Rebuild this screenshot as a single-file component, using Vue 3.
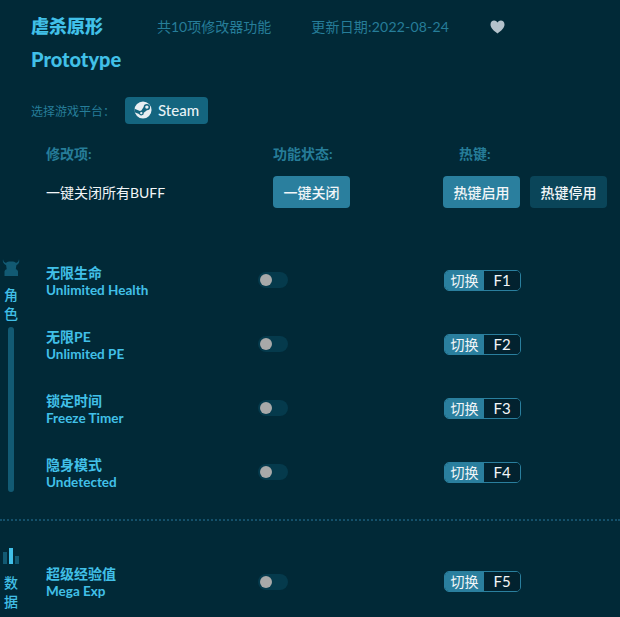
<template>
  <div class="page">
    <header class="head">
      <div class="head-top">
        <h1 class="title">虐杀原形</h1>
        <span class="info count">共10项修改器功能</span>
        <span class="info date">更新日期:2022-08-24</span>
        <svg class="heart" viewBox="0 0 16 15" width="15" height="14">
          <path d="M8 14.5C3.5 11 .5 8.4.5 4.8.5 2.3 2.3.6 4.4.6 5.900.6 7.200 1.400 8 2.700 8.800 1.400 10.100.6 11.600.6c2.100 0 3.900 1.700 3.900 4.200 0 3.600-3 6.200-7.500 9.700z" fill="#b4c2cb" />
        </svg>
      </div>
      <h2 class="title en">Prototype</h2>
    </header>

    <div class="platform">
      <span class="platform-label">选择游戏平台：</span>
      <div class="steam">
        <svg viewBox="0 0 20 20" width="18" height="18">
          <circle cx="10" cy="10" r="9.5" fill="#e8eef2" />
          <path d="M.6 12.4l5 2.1a2.8 2.8 0 0 0 5.3-1.5l3.5-2.6a3.6 3.6 0 1 0-3.7-3.7L8.2 10.6a2.8 2.8 0 0 0-1.6.4L.5 8.5z" fill="#14657f" />
          <circle cx="14.3" cy="6.8" r="1.9" fill="#e8eef2" />
          <circle cx="8.1" cy="13.4" r="1.3" fill="#e8eef2" />
        </svg>
        <span>Steam</span>
      </div>
    </div>

    <div class="row labels">
      <div class="col-name">修改项:</div>
      <div class="col-state">功能状态:</div>
      <div class="col-key">热键:</div>
    </div>

    <div class="row all">
      <div class="col-name all-name">一键关闭所有BUFF</div>
      <div class="col-state"><button class="btn on">一键关闭</button></div>
      <div class="col-key btns">
        <button class="btn on">热键启用</button>
        <button class="btn off">热键停用</button>
      </div>
    </div>

    <section class="group first">
      <aside class="side">
        <svg viewBox="0 0 18 17" width="18" height="17">
          <path d="M1 0c.2 2 .9 3.300 3 3.900C4.800 2.900 6.500 2.500 9 2.500s4.200.4 5 1.400c2.100-.6 2.800-1.900 3-3.900.7 2.600.2 5-2.600 6.200-.2 1.500-.4 2.800-.6 4 1.200.4 2 1 2.200 2.300V17H2.500v-4.500c.2-1.300 1-1.900 2.200-2.300-.2-1.200-.4-2.500-.6-4C1.300 5 .3 2.600 1 0z" fill="#125a73" />
        </svg>
        <span class="side-name">角<br />色</span>
        <div class="bar"></div>
      </aside>
      <div class="items">
        <div v-for="item in roleItems" :key="item.key" class="row item">
          <div class="col-name">
            <div class="cn">{{ item.cn }}</div>
            <div class="en-name">{{ item.en }}</div>
          </div>
          <div class="col-state"><span class="switch"><i></i></span></div>
          <div class="col-key">
            <div class="hotkey"><span class="hk-label">切换</span><span class="hk-key">{{ item.key }}</span></div>
          </div>
        </div>
      </div>
    </section>

    <div class="divider"></div>

    <section class="group second">
      <aside class="side">
        <div class="bars"><i></i><i></i><i></i></div>
        <span class="side-name">数<br />据</span>
      </aside>
      <div class="items">
        <div v-for="item in dataItems" :key="item.key" class="row item">
          <div class="col-name">
            <div class="cn">{{ item.cn }}</div>
            <div class="en-name">{{ item.en }}</div>
          </div>
          <div class="col-state"><span class="switch"><i></i></span></div>
          <div class="col-key">
            <div class="hotkey"><span class="hk-label">切换</span><span class="hk-key">{{ item.key }}</span></div>
          </div>
        </div>
      </div>
    </section>
  </div>
</template>

<script setup>
const roleItems = [
  { cn: "无限生命", en: "Unlimited Health", key: "F1" },
  { cn: "无限PE", en: "Unlimited PE", key: "F2" },
  { cn: "锁定时间", en: "Freeze Timer", key: "F3" },
  { cn: "隐身模式", en: "Undetected", key: "F4" }
];

const dataItems = [{ cn: "超级经验值", en: "Mega Exp", key: "F5" }];
</script>

<style>
html,
body {
  margin: 0;
  background: #012937;
  overflow: hidden;
}
</style>

<style scoped>
.page {
  width: 620px;
  height: 617px;
  overflow: hidden;
  background: #012937;
  font-family: Lato, "Noto Sans CJK SC", sans-serif;
  box-sizing: border-box;
  padding-top: 13px;
}

.head {
  padding-left: 31px;
}

.head-top {
  display: flex;
  align-items: center;
  height: 26px;
}

.title {
  margin: 0;
  font-size: 18px;
  line-height: 26px;
  font-weight: 900;
  color: #41c0e8;
}

.en {
  font-size: 20px;
  margin-top: 7px;
}

.info {
  font-size: 14px;
  color: #267d99;
}

.count {
  margin-left: 54px;
}

.date {
  margin-left: 40px;
  letter-spacing: 0.2px;
}

.heart {
  margin-left: 41px;
  margin-top: 1px;
}

.platform {
  display: flex;
  align-items: center;
  margin-top: 25px;
  padding-left: 31px;
}

.platform-label {
  width: 94px;
  font-size: 12px;
  color: #267d99;
}

.steam {
  display: flex;
  align-items: center;
  gap: 6px;
  width: 83px;
  height: 27px;
  box-sizing: border-box;
  padding-left: 9px;
  padding-bottom: 1px;
  background: #14657f;
  border-radius: 4px;
  color: #e8f2f6;
  font-size: 15px;
  font-weight: 500;
}

.row {
  display: flex;
  align-items: center;
}

.col-name {
  width: 228px;
  padding-left: 46px;
  box-sizing: border-box;
  flex: none;
}

.col-state {
  width: 170px;
  flex: none;
}

.col-key {
  flex: none;
}

.labels {
  margin-top: 17px;
  height: 24px;
  font-size: 14px;
  font-weight: 700;
  color: #267d99;
}

.labels .col-name {
  width: 273px;
}

.labels .col-state {
  width: 186px;
}

.all {
  margin-top: 11px;
  height: 32px;
}

.all .col-name {
  width: 273px;
}

.all .col-state {
  width: 170px;
}

.all-name {
  font-size: 14px;
  color: #f2f6f8;
}

.btns {
  display: flex;
  gap: 10px;
}

.btn {
  width: 77px;
  height: 32px;
  padding: 0;
  border: none;
  border-radius: 4px;
  font-family: inherit;
  font-size: 14px;
  font-weight: 500;
  color: #f2f6f8;
}

.on {
  background: #2a7f9e;
}

.off {
  background: #0a4559;
}

.group {
  display: flex;
}

.first {
  margin-top: 40px;
  height: 271px;
}

.second {
  margin-top: 19px;
}

.side {
  width: 22px;
  flex: none;
  display: flex;
  flex-direction: column;
  align-items: center;
}

.side svg {
  flex: none;
  margin-top: 11px;
}

.side-name {
  margin-top: 9px;
  font-size: 14px;
  line-height: 19px;
  font-weight: 500;
  color: #41c0e8;
  text-align: center;
}

.bar {
  width: 6px;
  height: 165px;
  margin-top: 4px;
  border-radius: 3px;
  background: #125a73;
}

.bars {
  display: flex;
  align-items: flex-end;
  gap: 2px;
  height: 16px;
  margin-top: 8px;
}

.bars i {
  display: block;
  width: 4px;
  height: 12px;
  background: #125a73;
}

.bars i:nth-child(2) {
  height: 16px;
  background: #41c0e8;
}

.bars i:last-child {
  height: 8px;
}

.items {
  flex: 1;
  margin-left: -22px;
}

.second .items {
  padding-top: 9px;
}

.second .switch {
  margin-top: 2px;
}

.item {
  height: 64px;
}

.item .col-name {
  width: 258px;
  padding-top: 2px;
}

.item .col-state {
  width: 186px;
  display: flex;
}

.cn {
  font-size: 14px;
  line-height: 18px;
  font-weight: 700;
  color: #41c0e8;
}

.en-name {
  font-size: 13.5px;
  line-height: 17px;
  font-weight: 700;
  color: #41c0e8;
}

.switch {
  display: block;
  width: 30px;
  height: 16px;
  border-radius: 8px;
  background: #053a4c;
  position: relative;
}

.switch i {
  position: absolute;
  left: 2px;
  top: 2px;
  width: 12px;
  height: 12px;
  border-radius: 50%;
  background: #a8a9a9;
}

.hotkey {
  display: flex;
  width: 77px;
  height: 21px;
  box-sizing: border-box;
  border: 1px solid #2a7f9e;
  border-radius: 5px;
  overflow: hidden;
}

.hk-label {
  width: 39px;
  flex: none;
  background: #2a7f9e;
  color: #f2f6f8;
  font-size: 14px;
  line-height: 19px;
  text-align: center;
}

.hk-key {
  flex: 1;
  background: #02222f;
  color: #f2f6f8;
  font-size: 15px;
  line-height: 19px;
  text-align: center;
}

.divider {
  border-top: 2px dotted #14506a;
}
</style>
